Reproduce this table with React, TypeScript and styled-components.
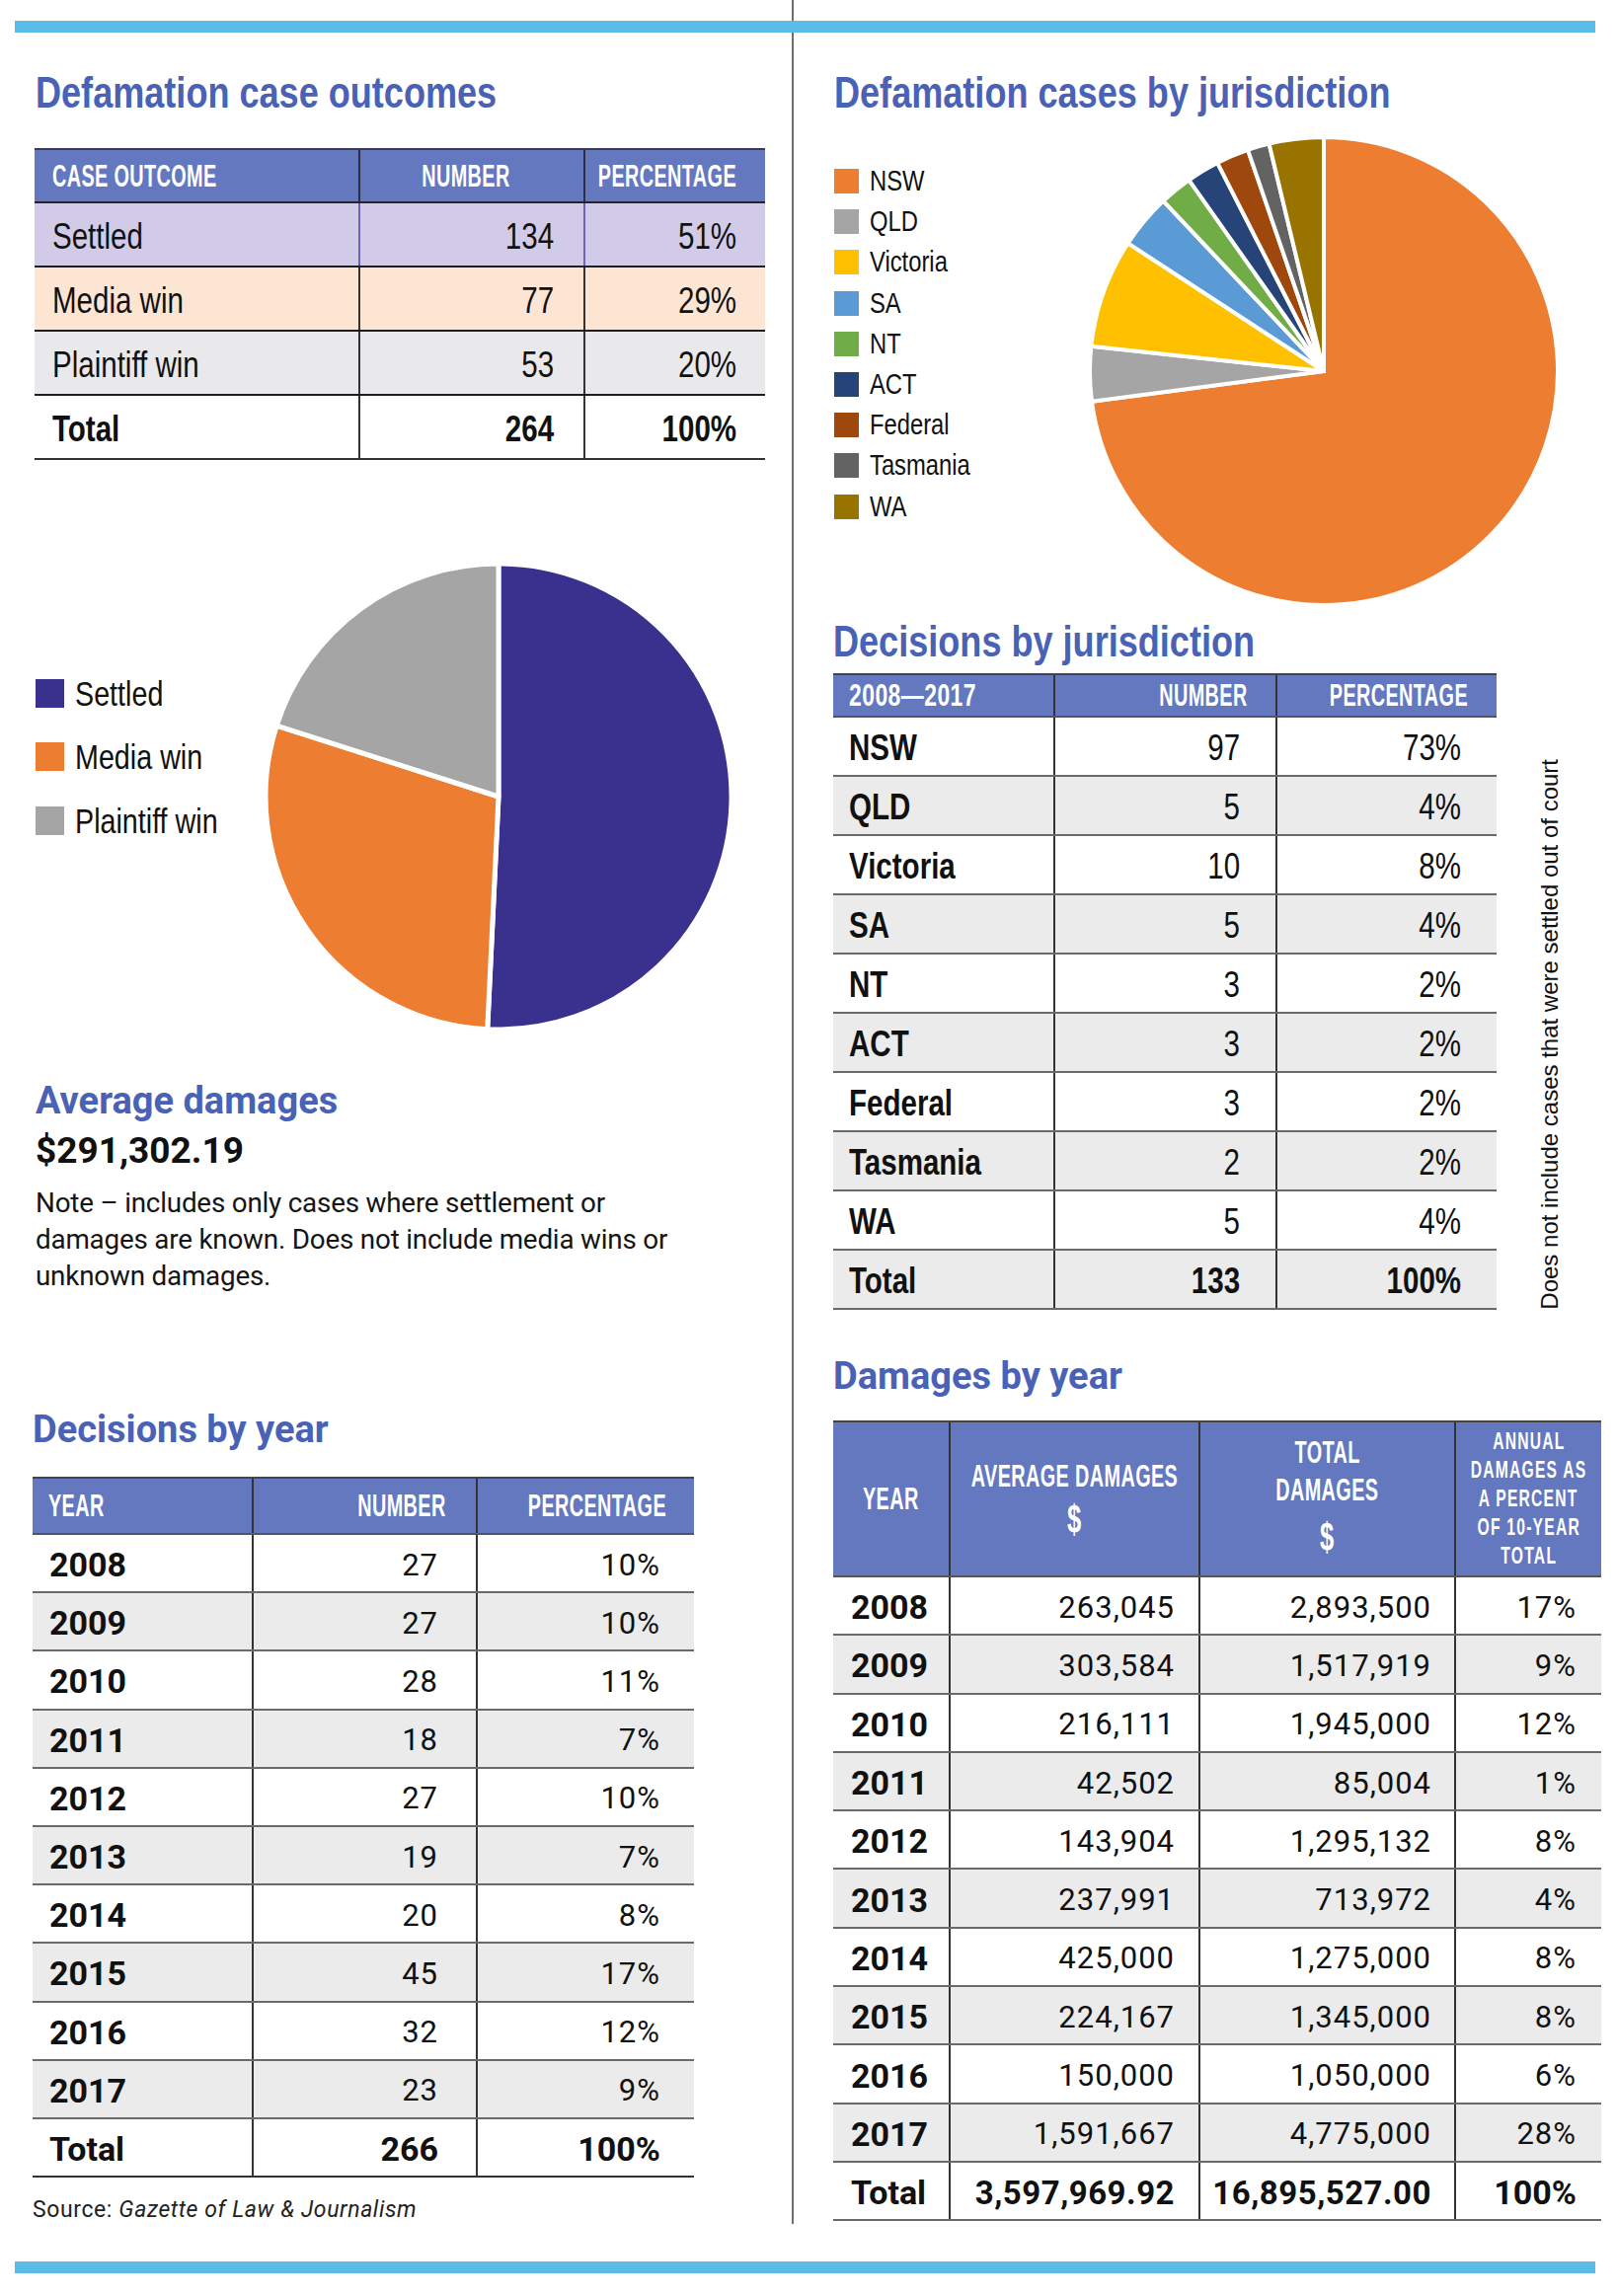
import React from "react";
import styled, { createGlobalStyle } from "styled-components";

const SANS = `Roboto, "Liberation Sans", Arial, sans-serif`;
const ARIAL = `"Liberation Sans", Arial, sans-serif`;
/* Arial Narrow is Arial at ~82% width: reproduced with Liberation Sans and a horizontal scale */
const NARROW_SCALE = 0.82;

const BLUE = "#4a62b5";
const HEAD = "#6378bf";
const SKY = "#5cbce8";
const ROWGREY = "#ebebeb";

type Align = "left" | "right" | "center";

const GlobalStyle = createGlobalStyle`
  html, body { margin: 0; padding: 0; background: #ffffff; }
  body { font-family: ${SANS}; color: #111; }
  *, *::before, *::after { box-sizing: border-box; }
`;

const Page = styled.div`
  width: 1638px;
  height: 2326px;
  display: grid;
  grid-template-columns: 802px 2px 834px;
  grid-template-rows: 33px auto auto;
  align-content: start;
  background: #fff;
  overflow: hidden;
`;

const Rule = styled.div<{ $row: number; $top: number }>`
  grid-column: 1 / -1;
  grid-row: ${(p) => p.$row};
  align-self: start;
  margin: ${(p) => p.$top}px 0 0 15px;
  width: 1601px;
  height: 12px;
  background: ${SKY};
  z-index: 1;
`;

const Divider = styled.div`
  grid-column: 2;
  grid-row: 1 / 3;
  width: 2px;
  background: #6e6e6e;
`;

const Column = styled.div<{ $col: number; $pad: number }>`
  grid-column: ${(p) => p.$col};
  grid-row: 2;
  display: flex;
  flex-direction: column;
  align-items: flex-start;
  padding-left: ${(p) => p.$pad}px;
`;

const CondTitle = styled.h2<{ $mt: number; $ml?: number }>`
  margin: ${(p) => p.$mt}px 0 0 ${(p) => p.$ml ?? 0}px;
  font-family: ${ARIAL};
  font-weight: 700;
  font-size: 44px;
  line-height: 44px;
  color: ${BLUE};
  white-space: nowrap;
  transform: scaleX(${NARROW_SCALE});
  transform-origin: left center;
`;

const WideTitle = styled.h2<{ $mt: number; $ml?: number }>`
  margin: ${(p) => p.$mt}px 0 0 ${(p) => p.$ml ?? 0}px;
  font-family: ${SANS};
  font-weight: 700;
  font-size: 38px;
  line-height: 38px;
  color: ${BLUE};
  white-space: nowrap;
`;

const Amount = styled.div`
  margin: 14px 0 0 3px;
  font-family: ${SANS};
  font-weight: 700;
  font-size: 37px;
  line-height: 36px;
  color: #111;
`;

const Note = styled.p`
  margin: 16px 0 0 3px;
  font-family: ${SANS};
  font-size: 27.8px;
  line-height: 37px;
  letter-spacing: -0.2px;
  color: #151515;
  white-space: nowrap;
`;

const Source = styled.p`
  margin: 19px 0 0 0;
  font-family: ${SANS};
  font-size: 23px;
  line-height: 28px;
  letter-spacing: 0.6px;
  color: #222;
  white-space: nowrap;
  em {
    font-style: italic;
  }
`;

/* ---------- tables ---------- */

const TableBox = styled.div<{ $w: number; $mt: number; $ml?: number }>`
  width: ${(p) => p.$w}px;
  margin: ${(p) => p.$mt}px 0 0 ${(p) => p.$ml ?? 0}px;
  flex: none;
`;

const Row = styled.div<{ $cols: string; $h: number; $bg: string; $line: string; $topLine?: string }>`
  display: grid;
  grid-template-columns: ${(p) => p.$cols};
  height: ${(p) => p.$h}px;
  background: ${(p) => p.$bg};
  border-bottom: 2px solid ${(p) => p.$line};
  ${(p) => (p.$topLine ? `border-top: 2px solid ${p.$topLine};` : "")}
`;

const Cell = styled.div<{ $align: Align; $pad: number; $vline?: string; $pt?: number }>`
  display: flex;
  align-items: center;
  justify-content: ${(p) => (p.$align === "left" ? "flex-start" : p.$align === "right" ? "flex-end" : "center")};
  padding-top: ${(p) => p.$pt ?? 0}px;
  padding-left: ${(p) => (p.$align === "left" ? p.$pad : 0)}px;
  padding-right: ${(p) => (p.$align === "right" ? p.$pad : 0)}px;
  border-left: ${(p) => (p.$vline ? `2px solid ${p.$vline}` : "none")};
  min-width: 0;
`;

/* wide sans numbers (Decisions by year / Damages by year) */
const Txt = styled.span<{ $b?: boolean; $size: number; $ls?: number }>`
  font-family: ${SANS};
  font-weight: ${(p) => (p.$b ? 700 : 400)};
  font-size: ${(p) => p.$size}px;
  line-height: 1;
  letter-spacing: ${(p) => p.$ls ?? 0}px;
  color: #111;
  white-space: nowrap;
`;

/* condensed text (outcomes / jurisdiction tables) */
const Narrow = styled.span<{ $b?: boolean; $size: number; $origin: Align }>`
  display: inline-block;
  font-family: ${ARIAL};
  font-weight: ${(p) => (p.$b ? 700 : 400)};
  font-size: ${(p) => p.$size}px;
  line-height: 1;
  color: #111;
  white-space: nowrap;
  transform: scaleX(${NARROW_SCALE});
  transform-origin: ${(p) => p.$origin} center;
`;

const HeadText = styled.span<{ $size?: number; $scale?: number; $origin?: Align; $lh?: number; $ls?: number }>`
  display: block;
  font-family: ${ARIAL};
  font-weight: 700;
  color: #fff;
  font-size: ${(p) => p.$size ?? 31}px;
  line-height: ${(p) => (p.$lh ? `${p.$lh}px` : 1)};
  letter-spacing: ${(p) => p.$ls ?? 0.6}px;
  transform: scaleX(${(p) => p.$scale ?? 0.64});
  transform-origin: ${(p) => p.$origin ?? "left"} center;
  white-space: nowrap;
`;

const HeadStack = styled.div`
  display: flex;
  flex-direction: column;
  align-items: center;
`;

/* ---------- legends & pies ---------- */

const ChartRow = styled.div<{ $mt: number }>`
  display: flex;
  align-items: flex-start;
  margin-top: ${(p) => p.$mt}px;
`;

const Legend = styled.ul<{ $w: number; $pt: number; $ml: number }>`
  list-style: none;
  margin: 0 0 0 ${(p) => p.$ml}px;
  padding: ${(p) => p.$pt}px 0 0 0;
  width: ${(p) => p.$w}px;
  flex: none;
`;

const LegendItem = styled.li<{ $h: number; $gap: number }>`
  display: flex;
  align-items: center;
  gap: ${(p) => p.$gap}px;
  height: ${(p) => p.$h}px;
`;

const Swatch = styled.span<{ $c: string; $s: number }>`
  display: block;
  flex: none;
  width: ${(p) => p.$s}px;
  height: ${(p) => p.$s}px;
  background: ${(p) => p.$c};
`;

const LegendLabel = styled.span<{ $size: number }>`
  display: inline-block;
  font-family: ${ARIAL};
  font-size: ${(p) => p.$size}px;
  line-height: 1;
  color: #111;
  white-space: nowrap;
  transform: scaleX(${NARROW_SCALE});
  transform-origin: left center;
`;

const PieSvg = styled.svg`
  display: block;
  flex: none;
  overflow: visible;
`;

const TableAside = styled.div`
  display: flex;
  align-items: flex-end;
  margin-top: 10px;
`;

const SideNote = styled.div`
  writing-mode: vertical-rl;
  transform: rotate(180deg);
  font-family: ${ARIAL};
  font-size: 24px;
  line-height: 28px;
  color: #111;
  margin-left: 40px;
  white-space: nowrap;
`;

type Slice = { label: string; value: number; color: string };

function slicePath(c: number, r: number, a0: number, a1: number): string {
  const rad = (a: number) => ((a - 90) * Math.PI) / 180;
  const x0 = c + r * Math.cos(rad(a0));
  const y0 = c + r * Math.sin(rad(a0));
  const x1 = c + r * Math.cos(rad(a1));
  const y1 = c + r * Math.sin(rad(a1));
  const large = a1 - a0 > 180 ? 1 : 0;
  return `M${c},${c} L${x0.toFixed(2)},${y0.toFixed(2)} A${r},${r} 0 ${large} 1 ${x1.toFixed(2)},${y1.toFixed(2)} Z`;
}

function Pie({ size, data, gap }: { size: number; data: Slice[]; gap: number }) {
  const total = data.reduce((s, d) => s + d.value, 0);
  const c = size / 2;
  const r = size / 2 - 1;
  let acc = 0;
  return (
    <PieSvg width={size} height={size} viewBox={`0 0 ${size} ${size}`}>
      {data.map((d) => {
        const a0 = (acc / total) * 360;
        acc += d.value;
        const a1 = (acc / total) * 360;
        return (
          <path
            key={d.label}
            d={slicePath(c, r, a0, a1)}
            fill={d.color}
            stroke="#ffffff"
            strokeWidth={gap}
            strokeLinejoin="round"
          />
        );
      })}
    </PieSvg>
  );
}

/* ---------- data ---------- */

const outcomes = [
  { label: "Settled", n: "134", p: "51%", bg: "#d1cbe8", color: "#3a318e", vline: "#6b64b8" },
  { label: "Media win", n: "77", p: "29%", bg: "#fde5d4", color: "#ed7d31", vline: "#333" },
  { label: "Plaintiff win", n: "53", p: "20%", bg: "#e9e9eb", color: "#a5a5a5", vline: "#333" },
];

const juris: Slice[] = [
  { label: "NSW", value: 97, color: "#ed7d31" },
  { label: "QLD", value: 5, color: "#a5a5a5" },
  { label: "Victoria", value: 10, color: "#ffc000" },
  { label: "SA", value: 5, color: "#5b9bd5" },
  { label: "NT", value: 3, color: "#70ad47" },
  { label: "ACT", value: 3, color: "#264478" },
  { label: "Federal", value: 3, color: "#9e480e" },
  { label: "Tasmania", value: 2, color: "#636363" },
  { label: "WA", value: 5, color: "#997300" },
];

const jurisPct: Record<string, string> = {
  NSW: "73%", QLD: "4%", Victoria: "8%", SA: "4%", NT: "2%", ACT: "2%", Federal: "2%", Tasmania: "2%", WA: "4%",
};

const years = [
  { y: "2008", n: "27", p: "10%" },
  { y: "2009", n: "27", p: "10%" },
  { y: "2010", n: "28", p: "11%" },
  { y: "2011", n: "18", p: "7%" },
  { y: "2012", n: "27", p: "10%" },
  { y: "2013", n: "19", p: "7%" },
  { y: "2014", n: "20", p: "8%" },
  { y: "2015", n: "45", p: "17%" },
  { y: "2016", n: "32", p: "12%" },
  { y: "2017", n: "23", p: "9%" },
];

const damages = [
  { y: "2008", a: "263,045", t: "2,893,500", p: "17%" },
  { y: "2009", a: "303,584", t: "1,517,919", p: "9%" },
  { y: "2010", a: "216,111", t: "1,945,000", p: "12%" },
  { y: "2011", a: "42,502", t: "85,004", p: "1%" },
  { y: "2012", a: "143,904", t: "1,295,132", p: "8%" },
  { y: "2013", a: "237,991", t: "713,972", p: "4%" },
  { y: "2014", a: "425,000", t: "1,275,000", p: "8%" },
  { y: "2015", a: "224,167", t: "1,345,000", p: "8%" },
  { y: "2016", a: "150,000", t: "1,050,000", p: "6%" },
  { y: "2017", a: "1,591,667", t: "4,775,000", p: "28%" },
];

const T1 = "328px 228px 184px";
const T2 = "223px 225px 224px";
const T3 = "222px 227px 221px";
const T4 = "117px 253px 259px 149px";

const LINE = "#6a6a6a";
const VLINE = "#333";

export default function App() {
  return (
    <>
      <GlobalStyle />
      <Page>
        <Divider />
        <Rule $row={1} $top={21} />

        {/* ---------------- LEFT COLUMN ---------------- */}
        <Column $col={1} $pad={33}>
          <CondTitle $mt={39} $ml={3}>Defamation case outcomes</CondTitle>

          <TableBox $w={740} $mt={34} $ml={2}>
            <Row $cols={T1} $h={56} $bg={HEAD} $line="#23232e" $topLine="#3b3b4d">
              <Cell $align="left" $pad={18}><HeadText>CASE OUTCOME</HeadText></Cell>
              <Cell $align="right" $pad={74} $vline="#2e2e40"><HeadText $origin="right">NUMBER</HeadText></Cell>
              <Cell $align="right" $pad={29} $vline="#2e2e40"><HeadText $origin="right">PERCENTAGE</HeadText></Cell>
            </Row>
            {outcomes.map((o) => (
              <Row key={o.label} $cols={T1} $h={65} $bg={o.bg} $line="#1e1e1e">
                <Cell $align="left" $pad={18} $pt={5}><Narrow $size={36} $origin="left">{o.label}</Narrow></Cell>
                <Cell $align="right" $pad={30} $pt={5} $vline={o.vline}><Narrow $size={36} $origin="right">{o.n}</Narrow></Cell>
                <Cell $align="right" $pad={29} $pt={5} $vline={o.vline}><Narrow $size={36} $origin="right">{o.p}</Narrow></Cell>
              </Row>
            ))}
            <Row $cols={T1} $h={65} $bg="#ffffff" $line="#333">
              <Cell $align="left" $pad={18} $pt={5}><Narrow $b $size={36} $origin="left">Total</Narrow></Cell>
              <Cell $align="right" $pad={30} $pt={5} $vline={VLINE}><Narrow $b $size={36} $origin="right">264</Narrow></Cell>
              <Cell $align="right" $pad={29} $pt={5} $vline={VLINE}><Narrow $b $size={36} $origin="right">100%</Narrow></Cell>
            </Row>
          </TableBox>

          <ChartRow $mt={104}>
            <Legend $w={232} $pt={100} $ml={3}>
              {outcomes.map((o) => (
                <LegendItem key={o.label} $h={64.5} $gap={11}>
                  <Swatch $c={o.color} $s={29} />
                  <LegendLabel $size={35}>{o.label}</LegendLabel>
                </LegendItem>
              ))}
            </Legend>
            <Pie
              size={474}
              gap={5}
              data={outcomes.map((o) => ({ label: o.label, value: Number(o.n), color: o.color }))}
            />
          </ChartRow>

          <WideTitle $mt={52} $ml={3}>Average damages</WideTitle>
          <Amount>$291,302.19</Amount>
          <Note>
            Note – includes only cases where settlement or
            <br />
            damages are known. Does not include media wins or
            <br />
            unknown damages.
          </Note>

          <WideTitle $mt={118}>Decisions by year</WideTitle>
          <TableBox $w={670} $mt={29}>
            <Row $cols={T3} $h={59} $bg={HEAD} $line="#555" $topLine="#444">
              <Cell $align="left" $pad={16}><HeadText>YEAR</HeadText></Cell>
              <Cell $align="right" $pad={30} $vline={VLINE}><HeadText $origin="right">NUMBER</HeadText></Cell>
              <Cell $align="right" $pad={28} $vline={VLINE}><HeadText $origin="right">PERCENTAGE</HeadText></Cell>
            </Row>
            {years.map((r, i) => (
              <Row key={r.y} $cols={T3} $h={59.2} $bg={i % 2 ? ROWGREY : "#fff"} $line={LINE}>
                <Cell $align="left" $pad={17} $pt={3}><Txt $b $size={34}>{r.y}</Txt></Cell>
                <Cell $align="right" $pad={38} $pt={3} $vline={VLINE}><Txt $size={31} $ls={1}>{r.n}</Txt></Cell>
                <Cell $align="right" $pad={34} $pt={3} $vline={VLINE}><Txt $size={31} $ls={1}>{r.p}</Txt></Cell>
              </Row>
            ))}
            <Row $cols={T3} $h={59.2} $bg="#fff" $line="#333">
              <Cell $align="left" $pad={17} $pt={3}><Txt $b $size={34}>Total</Txt></Cell>
              <Cell $align="right" $pad={38} $pt={3} $vline={VLINE}><Txt $b $size={34}>266</Txt></Cell>
              <Cell $align="right" $pad={34} $pt={3} $vline={VLINE}><Txt $b $size={34}>100%</Txt></Cell>
            </Row>
          </TableBox>
          <Source>
            Source: <em>Gazette of Law &amp; Journalism</em>
          </Source>
        </Column>

        {/* ---------------- RIGHT COLUMN ---------------- */}
        <Column $col={3} $pad={40}>
          <CondTitle $mt={39} $ml={1}>Defamation cases by jurisdiction</CondTitle>

          <ChartRow $mt={22}>
            <Legend $w={258} $pt={25} $ml={1}>
              {juris.map((j) => (
                <LegendItem key={j.label} $h={41.2} $gap={11}>
                  <Swatch $c={j.color} $s={25} />
                  <LegendLabel $size={29}>{j.label}</LegendLabel>
                </LegendItem>
              ))}
            </Legend>
            <Pie size={476} gap={4} data={juris} />
          </ChartRow>

          <CondTitle $mt={14}>Decisions by jurisdiction</CondTitle>

          <TableAside>
            <TableBox $w={672} $mt={0}>
              <Row $cols={T2} $h={45} $bg={HEAD} $line="#555" $topLine="#444">
                <Cell $align="left" $pad={16}><HeadText $scale={0.74}>2008—2017</HeadText></Cell>
                <Cell $align="right" $pad={28} $vline={VLINE}><HeadText $origin="right">NUMBER</HeadText></Cell>
                <Cell $align="right" $pad={29} $vline={VLINE}><HeadText $origin="right">PERCENTAGE</HeadText></Cell>
              </Row>
              {juris.map((j, i) => (
                <Row key={j.label} $cols={T2} $h={60} $bg={i % 2 ? ROWGREY : "#fff"} $line={LINE}>
                  <Cell $align="left" $pad={16} $pt={3}><Narrow $b $size={36} $origin="left">{j.label}</Narrow></Cell>
                  <Cell $align="right" $pad={36} $pt={3} $vline={VLINE}><Narrow $size={36} $origin="right">{j.value}</Narrow></Cell>
                  <Cell $align="right" $pad={36} $pt={3} $vline={VLINE}><Narrow $size={36} $origin="right">{jurisPct[j.label]}</Narrow></Cell>
                </Row>
              ))}
              <Row $cols={T2} $h={60} $bg={ROWGREY} $line={LINE}>
                <Cell $align="left" $pad={16} $pt={3}><Narrow $b $size={36} $origin="left">Total</Narrow></Cell>
                <Cell $align="right" $pad={36} $pt={3} $vline={VLINE}><Narrow $b $size={36} $origin="right">133</Narrow></Cell>
                <Cell $align="right" $pad={36} $pt={3} $vline={VLINE}><Narrow $b $size={36} $origin="right">100%</Narrow></Cell>
              </Row>
            </TableBox>
            <SideNote>Does not include cases that were settled out of court</SideNote>
          </TableAside>

          <WideTitle $mt={48}>Damages by year</WideTitle>
          <TableBox $w={778} $mt={26}>
            <Row $cols={T4} $h={159} $bg={HEAD} $line="#555" $topLine="#444">
              <Cell $align="center" $pad={0}><HeadText $origin="center">YEAR</HeadText></Cell>
              <Cell $align="center" $pad={0} $vline={VLINE}>
                <HeadStack>
                  <HeadText $origin="center" $lh={40}>AVERAGE DAMAGES</HeadText>
                  <HeadText $origin="center" $lh={46} $size={40}>$</HeadText>
                </HeadStack>
              </Cell>
              <Cell $align="center" $pad={0} $vline={VLINE}>
                <HeadStack>
                  <HeadText $origin="center" $lh={38}>TOTAL</HeadText>
                  <HeadText $origin="center" $lh={38}>DAMAGES</HeadText>
                  <HeadText $origin="center" $lh={56} $size={40}>$</HeadText>
                </HeadStack>
              </Cell>
              <Cell $align="center" $pad={0} $vline={VLINE}>
                <HeadStack>
                  {["ANNUAL", "DAMAGES AS", "A PERCENT", "OF 10-YEAR", "TOTAL"].map((l) => (
                    <HeadText key={l} $origin="center" $lh={29} $size={23} $scale={0.68} $ls={1.8}>
                      {l}
                    </HeadText>
                  ))}
                </HeadStack>
              </Cell>
            </Row>
            {damages.map((r, i) => (
              <Row key={r.y} $cols={T4} $h={59.3} $bg={i % 2 ? ROWGREY : "#fff"} $line={LINE}>
                <Cell $align="left" $pad={18} $pt={3}><Txt $b $size={34}>{r.y}</Txt></Cell>
                <Cell $align="right" $pad={24} $pt={3} $vline={VLINE}><Txt $size={31} $ls={1}>{r.a}</Txt></Cell>
                <Cell $align="right" $pad={23} $pt={3} $vline={VLINE}><Txt $size={31} $ls={1}>{r.t}</Txt></Cell>
                <Cell $align="right" $pad={25} $pt={3} $vline={VLINE}><Txt $size={31} $ls={1}>{r.p}</Txt></Cell>
              </Row>
            ))}
            <Row $cols={T4} $h={59.3} $bg="#fff" $line={LINE}>
              <Cell $align="left" $pad={18} $pt={3}><Txt $b $size={34}>Total</Txt></Cell>
              <Cell $align="right" $pad={24} $pt={3} $vline={VLINE}><Txt $b $size={33} $ls={0.5}>3,597,969.92</Txt></Cell>
              <Cell $align="right" $pad={23} $pt={3} $vline={VLINE}><Txt $b $size={33} $ls={0.5}>16,895,527.00</Txt></Cell>
              <Cell $align="right" $pad={25} $pt={3} $vline={VLINE}><Txt $b $size={34}>100%</Txt></Cell>
            </Row>
          </TableBox>
        </Column>

        <Rule $row={3} $top={38} />
      </Page>
    </>
  );
}
